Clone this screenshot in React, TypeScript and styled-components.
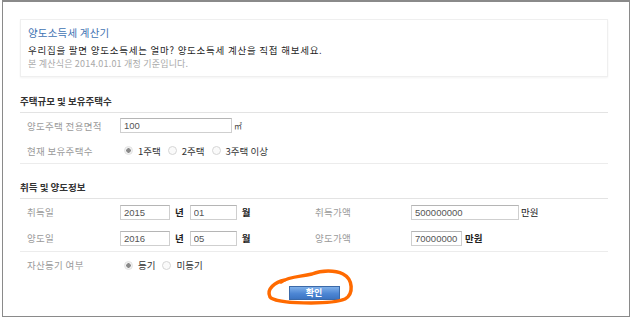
import React from 'react'
import styled, { createGlobalStyle } from 'styled-components'

const GlobalStyle = createGlobalStyle`
  html, body {
    margin: 0;
    padding: 0;
    background: #fff;
  }
  body {
    font-family: 'Noto Sans CJK KR', 'Noto Sans', sans-serif;
    color: #333;
  }
`

const Frame = styled.div`
  box-sizing: border-box;
  margin-left: 2px;
  width: 628px;
  height: 317px;
  border: 1px solid #8a8a8a;
  border-top-width: 2px;
  padding: 17px 21px 0 17px;
`

const IntroCard = styled.div`
  box-sizing: border-box;
  height: 58px;
  border: 1px solid #efefef;
  box-shadow: 0 1px 2px rgba(0, 0, 0, 0.05);
  padding: 4px 0 0 7px;
`

const Title = styled.h2`
  margin: 0;
  font-size: 10.5px;
  font-weight: 400;
  line-height: 17px;
  color: #3f73b3;
  letter-spacing: 0.2px;
`

const Lead = styled.p`
  margin: 3px 0 0;
  font-size: 9.5px;
  line-height: 12px;
  color: #1f1f1f;
  letter-spacing: 0.75px;
`

const Note = styled.p`
  margin: 2px 0 0;
  font-size: 9px;
  line-height: 11px;
  color: #a9a9a9;
  letter-spacing: 0.2px;
`

const SectionTitle = styled.h3<{ $top: number }>`
  margin: ${(p) => p.$top}px 0 0;
  height: 20px;
  line-height: 18px;
  font-size: 9.5px;
  font-weight: 700;
  color: #333;
  border-bottom: 1px solid #e3e3e3;
`

const RowGroup = styled.div<{ $divider?: boolean }>`
  border-bottom: ${(p) => (p.$divider ? '1px solid #ececec' : 'none')};
`

const Row = styled.div<{ $h: number }>`
  display: flex;
  align-items: center;
  height: ${(p) => p.$h}px;
  padding-left: 7px;
  font-size: 9.5px;
`

const Label = styled.div<{ $w: number }>`
  width: ${(p) => p.$w}px;
  flex-shrink: 0;
  color: #9a9a9a;
  letter-spacing: 0.3px;
`

const Value = styled.div<{ $w?: number }>`
  display: flex;
  align-items: center;
  width: ${(p) => (p.$w ? `${p.$w}px` : 'auto')};
  flex-shrink: 0;
  color: #333;
`

const Field = styled.input<{ $w: number }>`
  box-sizing: border-box;
  width: ${(p) => p.$w}px;
  height: 15px;
  margin: 0;
  padding: 0 0 0 3px;
  border: 1px solid #cfcfcf;
  border-top-color: #b5b5b5;
  font-family: 'Liberation Sans', sans-serif;
  font-size: 9.5px;
  color: #555;
  background: #fff;
  outline: none;
`

const Unit = styled.span<{ $gap: number; $bold?: boolean }>`
  margin-left: ${(p) => p.$gap}px;
  margin-right: 6px;
  color: #222;
  font-size: 9.5px;
  font-weight: ${(p) => (p.$bold ? 700 : 400)};
`

const Sup = styled.span`
  font-size: 8px;
  color: #444;
  margin-left: 2px;
`

const RadioOption = styled.label`
  display: flex;
  align-items: center;
  margin-right: 3px;
  color: #333;
`

const Radio = styled.input`
  appearance: none;
  box-sizing: border-box;
  width: 9px;
  height: 9px;
  margin: 0 5px 0 4px;
  border: 1px solid #d6d6d6;
  border-radius: 50%;
  background: #fafafa;

  &:checked {
    background: radial-gradient(circle, #8a8a8a 0 2px, #f2f2f2 2.5px);
    border-color: #e2e2e2;
  }
`

const ButtonArea = styled.div`
  display: flex;
  justify-content: center;
  margin-top: 8px;
`

const ConfirmWrap = styled.div`
  position: relative;
  display: inline-block;
`

const ConfirmButton = styled.button`
  display: block;
  width: 51px;
  height: 14px;
  margin: 0;
  padding: 0;
  border: 1px solid #3b69a8;
  background: linear-gradient(#7fb0ea, #4d86d4 55%, #3c74c2);
  color: #fff;
  font-family: 'Noto Sans CJK KR', sans-serif;
  font-size: 9px;
  font-weight: 700;
  line-height: 12px;
  cursor: pointer;
`

const Highlight = styled.svg`
  position: absolute;
  left: -23px;
  top: -18px;
  width: 90px;
  height: 40px;
  pointer-events: none;
  overflow: visible;
`

const App: React.FC = () => {
  return (
    <>
      <GlobalStyle />
      <Frame>
        <IntroCard>
          <Title>양도소득세 계산기</Title>
          <Lead>우리집을 팔면 양도소득세는 얼마? 양도소득세 계산을 직접 해보세요.</Lead>
          <Note>본 계산식은 2014.01.01 개정 기준입니다.</Note>
        </IntroCard>

        <SectionTitle $top={15}>주택규모 및 보유주택수</SectionTitle>
        <RowGroup $divider>
          <Row $h={25}>
            <Label $w={93}>양도주택 전용면적</Label>
            <Value>
              <Field $w={112} defaultValue="100" />
              <Sup>㎡</Sup>
            </Value>
          </Row>
          <Row $h={25}>
            <Label $w={93}>현재 보유주택수</Label>
            <Value>
              <RadioOption>
                <Radio type="radio" name="houses" defaultChecked />
                1주택
              </RadioOption>
              <RadioOption>
                <Radio type="radio" name="houses" />
                2주택
              </RadioOption>
              <RadioOption>
                <Radio type="radio" name="houses" />
                3주택 이상
              </RadioOption>
            </Value>
          </Row>
        </RowGroup>

        <SectionTitle $top={14}>취득 및 양도정보</SectionTitle>
        <RowGroup $divider>
          <Row $h={26}>
            <Label $w={93}>취득일</Label>
            <Value $w={195}>
              <Field $w={50} defaultValue="2015" />
              <Unit $gap={5} $bold>년</Unit>
              <Field $w={47} defaultValue="01" />
              <Unit $gap={5} $bold>월</Unit>
            </Value>
            <Label $w={96}>취득가액</Label>
            <Value>
              <Field $w={108} defaultValue="500000000" />
              <Unit $gap={2}>만원</Unit>
            </Value>
          </Row>
          <Row $h={26}>
            <Label $w={93}>양도일</Label>
            <Value $w={195}>
              <Field $w={50} defaultValue="2016" />
              <Unit $gap={5} $bold>년</Unit>
              <Field $w={47} defaultValue="05" />
              <Unit $gap={5} $bold>월</Unit>
            </Value>
            <Label $w={96}>양도가액</Label>
            <Value>
              <Field $w={51} defaultValue="70000000" />
              <Unit $gap={3} $bold>만원</Unit>
            </Value>
          </Row>
        </RowGroup>
        <RowGroup>
          <Row $h={26}>
            <Label $w={93}>자산등기 여부</Label>
            <Value>
              <RadioOption>
                <Radio type="radio" name="registered" defaultChecked />
                등기
              </RadioOption>
              <RadioOption>
                <Radio type="radio" name="registered" />
                미등기
              </RadioOption>
            </Value>
          </Row>
        </RowGroup>

        <ButtonArea>
          <ConfirmWrap>
            <ConfirmButton type="button">확인</ConfirmButton>
            <Highlight viewBox="0 0 90 40">
              <path
                d="M19 12 C9 14, 0 21, 4 29 C9 36, 64 37, 79 31 C88 26, 87 11, 77 6 C69 2, 56 2, 46 6 C34 9, 24 8, 15 14"
                fill="none"
                stroke="#ff6a00"
                strokeWidth="3.5"
                strokeLinecap="round"
              />
            </Highlight>
          </ConfirmWrap>
        </ButtonArea>
      </Frame>
    </>
  )
}

export default App
